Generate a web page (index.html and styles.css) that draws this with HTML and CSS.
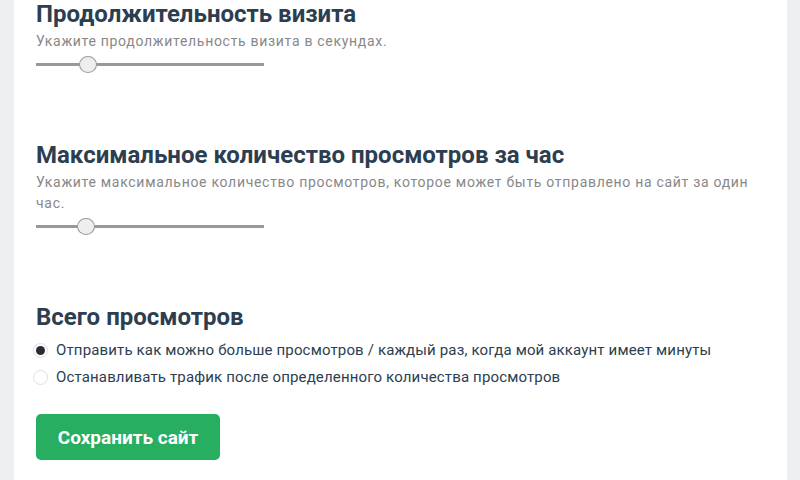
FILE: index.html
```html
<!DOCTYPE html>
<html lang="ru">
<head>
<meta charset="utf-8">
<link rel="stylesheet" href="styles.css">
</head>
<body>
<div class="panel">
  <section class="field">
    <h2 class="field-title">Продолжительность визита</h2>
    <p class="field-desc">Укажите продолжительность визита в секундах.</p>
    <div class="slider"><span class="thumb" style="left: 52px"></span></div>
  </section>
  <section class="field">
    <h2 class="field-title">Максимальное количество просмотров за час</h2>
    <p class="field-desc">Укажите максимальное количество просмотров, которое может быть отправлено на сайт за один час.</p>
    <div class="slider"><span class="thumb" style="left: 50px"></span></div>
  </section>
  <section class="field">
    <h2 class="field-title">Всего просмотров</h2>
    <label class="radio"><span class="dot checked"></span>Отправить как можно больше просмотров / каждый раз, когда мой аккаунт имеет минуты</label>
    <label class="radio"><span class="dot"></span>Останавливать трафик после определенного количества просмотров</label>
  </section>
  <button class="save">Сохранить сайт</button>
</div>
</body>
</html>
```
FILE: styles.css
```css
html, body {
  margin: 0;
  padding: 0;
}
body {
  background: #ecf0f1;
  font-family: Roboto, "Noto Sans", sans-serif;
  width: 800px;
  height: 480px;
  overflow: hidden;
}
.panel {
  margin: 0 13px 0 14px;
  background: #ffffff;
  height: 480px;
  padding: 0 22px;
  box-sizing: border-box;
}
.field {
  margin: 0 0 75px 0;
}
.field:last-of-type {
  margin-bottom: 23px;
}
.field-title {
  margin: 0;
  font-size: 24px;
  line-height: 28px;
  font-weight: 700;
  color: #2c3e50;
}
.field-desc {
  margin: 3px 0 0 0;
  font-size: 14px;
  line-height: 21px;
  letter-spacing: 0.7px;
  color: #888888;
}
.slider {
  position: relative;
  width: 228px;
  height: 3px;
  background: #999999;
  margin-top: 11px;
}
.thumb {
  position: absolute;
  top: -7px;
  width: 18px;
  height: 17px;
  margin-left: -9px;
  border-radius: 50%;
  background: #eeeeee;
  border: 1px solid #999999;
  box-sizing: border-box;
}
.radio {
  display: flex;
  align-items: center;
  gap: 8px;
  font-size: 15px;
  line-height: 27px;
  letter-spacing: 0.15px;
  color: #2c3e50;
}
.field-title + .radio {
  margin-top: 6px;
}
.dot {
  flex: none;
  width: 15px;
  height: 15px;
  margin-left: -3px;
  border-radius: 50%;
  border: 1px solid #e0e0e0;
  background: #fff;
  box-sizing: border-box;
  position: relative;
}
.dot.checked::after {
  content: "";
  position: absolute;
  left: 2px;
  top: 2px;
  width: 9px;
  height: 9px;
  border-radius: 50%;
  background: #2b2b33;
}
.save {
  display: block;
  border: 0;
  background: #27ae60;
  color: #fff;
  font-family: Roboto, "Noto Sans", sans-serif;
  font-weight: 700;
  font-size: 19px;
  width: 184px;
  height: 46px;
  border-radius: 5px;
  padding: 0;
}
```
